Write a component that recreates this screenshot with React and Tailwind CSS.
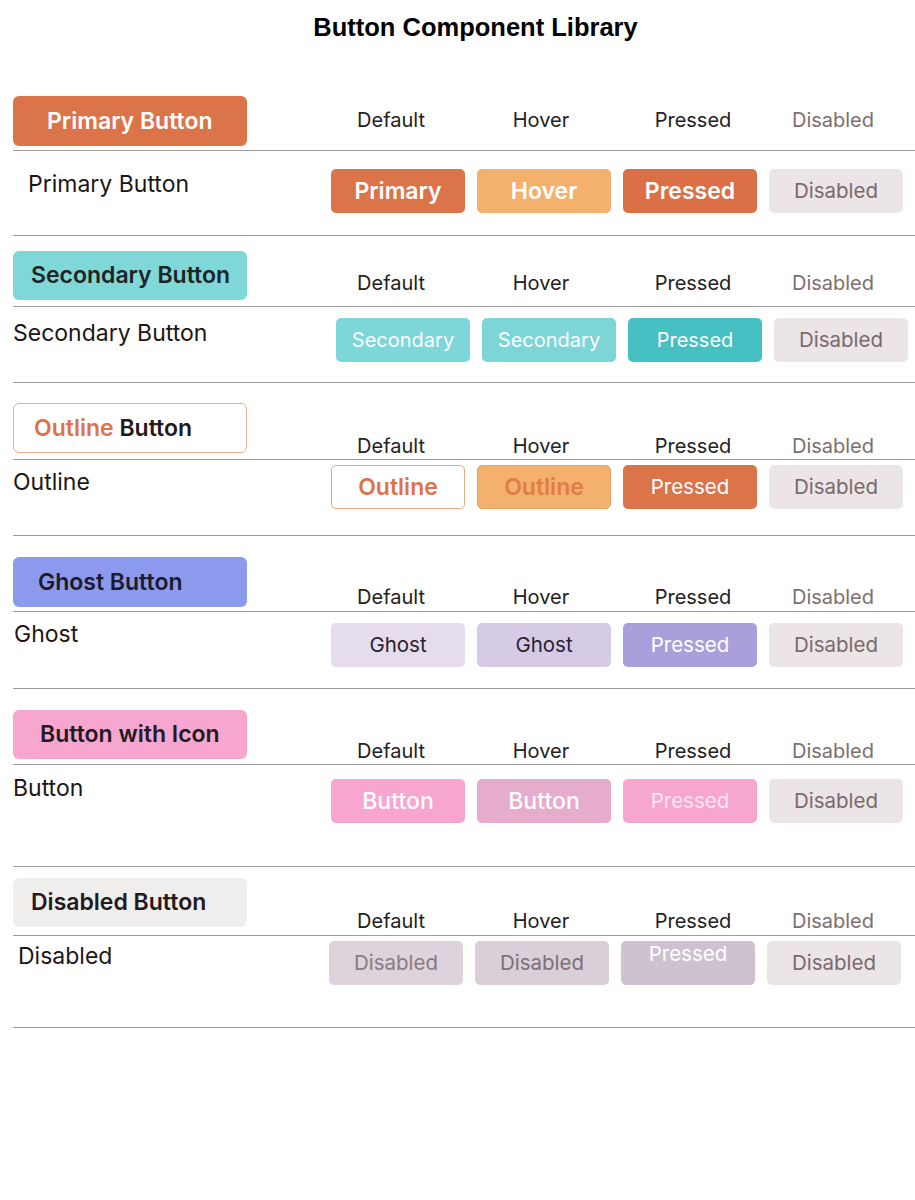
import React from 'react';

const STATES = [
  { name: 'Default', cls: 'w-[150px] text-[#222222]' },
  { name: 'Hover', cls: 'w-[150px] text-[#222222]' },
  { name: 'Pressed', cls: 'w-[154px] text-[#222222]' },
  { name: 'Disabled', cls: 'w-[126px] text-[#7d6e70]' },
];

const DISABLED = { text: 'Disabled', cls: 'bg-[#ebe5e7] text-[#7a6a6c] text-[20.5px]' };

const sections = [
  {
    wrap: 'pt-[53px]',
    head: 'h-[54px]',
    headBtn: 'h-[50px] bg-[#dc744a] text-white pl-[34px]',
    headText: <>Primary Button</>,
    labels: 'pb-[18px]',
    row: 'h-[84px]',
    labelBox: 'w-[318px] pl-[15px] pt-[18px]',
    rowLabel: 'Primary Button',
    btnBox: 'pt-[18px]',
    buttons: [
      { text: 'Primary', cls: 'bg-[#dc744a] text-white text-[23px] font-semibold' },
      { text: 'Hover', cls: 'bg-[#f4b06d] text-white text-[23px] font-semibold' },
      { text: 'Pressed', cls: 'bg-[#db6f46] text-white text-[23px] font-semibold' },
      DISABLED,
    ],
  },
  {
    wrap: 'pt-[15px]',
    head: 'h-[55px]',
    headBtn: 'h-[49px] bg-[#7fd7d8] text-[#1b2525] pl-[18px]',
    headText: <>Secondary Button</>,
    labels: 'pb-[11px]',
    row: 'h-[75px]',
    labelBox: 'w-[323px] pt-[11px]',
    rowLabel: 'Secondary Button',
    btnBox: 'pt-[11px]',
    buttons: [
      { text: 'Secondary', cls: 'bg-[#7dd6d8] text-white text-[20px]' },
      { text: 'Secondary', cls: 'bg-[#7cd5d7] text-white text-[20px]' },
      { text: 'Pressed', cls: 'bg-[#46c0c3] text-white text-[20px]' },
      DISABLED,
    ],
  },
  {
    wrap: 'pt-[20px]',
    head: 'h-[56px]',
    headBtn: 'h-[50px] bg-white border border-[#e4ae97] text-[#221a1a] pl-[20px]',
    headText: (
      <>
        <span className="text-[#dc744a]">Outline</span> Button
      </>
    ),
    labels: 'pb-[1px]',
    row: 'h-[75px]',
    labelBox: 'w-[318px] pt-[7px]',
    rowLabel: 'Outline',
    btnBox: 'pt-[5px]',
    buttons: [
      { text: 'Outline', cls: 'bg-white border border-[#e6a88e] text-[#dc744a] text-[23px] font-semibold' },
      { text: 'Outline', cls: 'bg-[#f4b06d] border border-[#eba262] text-[#e07c48] text-[23px] font-semibold' },
      { text: 'Pressed', cls: 'bg-[#dc744a] text-white text-[20.5px]' },
      DISABLED,
    ],
  },
  {
    wrap: 'pt-[21px]',
    head: 'h-[54px]',
    headBtn: 'h-[50px] bg-[#8b9aec] text-[#1d1a2c] pl-[25px]',
    headText: <>Ghost Button</>,
    labels: 'pb-[2px]',
    row: 'h-[76px]',
    labelBox: 'w-[318px] pl-[1px] pt-[7px]',
    rowLabel: 'Ghost',
    btnBox: 'pt-[11px]',
    buttons: [
      { text: 'Ghost', cls: 'bg-[#e5dcec] text-[#2a2230] text-[20.5px]' },
      { text: 'Ghost', cls: 'bg-[#d5cbe6] text-[#2a2230] text-[20.5px]' },
      { text: 'Pressed', cls: 'bg-[#a99fdb] text-white text-[20.5px]' },
      DISABLED,
    ],
  },
  {
    wrap: 'pt-[21px]',
    head: 'h-[54px]',
    headBtn: 'h-[49px] bg-[#f6a6cf] text-[#231a20] pl-[27px]',
    headText: <>Button with Icon</>,
    labels: 'pb-[1px]',
    row: 'h-[101px]',
    labelBox: 'w-[318px] pt-[8px]',
    rowLabel: 'Button',
    btnBox: 'pt-[14px]',
    buttons: [
      { text: 'Button', cls: 'bg-[#f6a6cf] text-white text-[23px] font-medium' },
      { text: 'Button', cls: 'bg-[#e6accb] text-white text-[23px] font-medium' },
      { text: 'Pressed', cls: 'bg-[#f6a6cf] text-[#fde6f1] text-[20.5px]' },
      DISABLED,
    ],
  },
  {
    wrap: 'pt-[11px]',
    head: 'h-[57px]',
    headBtn: 'h-[49px] bg-[#efeeed] text-[#221a1c] pl-[18px]',
    headText: <>Disabled Button</>,
    labels: 'pb-[2px]',
    row: 'h-[91px]',
    labelBox: 'w-[316px] pl-[5px] pt-[5px]',
    rowLabel: 'Disabled',
    btnBox: 'pt-[5px]',
    buttons: [
      { text: 'Disabled', cls: 'bg-[#ddd3dc] text-[#8a7a82] text-[20.5px]' },
      { text: 'Disabled', cls: 'bg-[#d8cfd9] text-[#7f7077] text-[20.5px]' },
      { text: 'Pressed', cls: 'bg-[#cdc2ce] text-white text-[20.5px] items-start pt-[3px]' },
      { text: 'Disabled', cls: 'bg-[#ebe5e8] text-[#7a6a6c] text-[20.5px]' },
    ],
  },
];

function Section({ s }) {
  return (
    <div className={s.wrap}>
      <div className={`flex pl-[13px] ${s.head}`}>
        <div
          className={`w-[234px] self-start flex items-center rounded-md text-[23px] font-semibold leading-none ${s.headBtn}`}
        >
          <span>{s.headText}</span>
        </div>
        <div className={`ml-[69px] flex self-end ${s.labels}`}>
          {STATES.map((st) => (
            <div key={st.name} className={`text-center text-[20px] leading-[24px] ${st.cls}`}>
              {st.name}
            </div>
          ))}
        </div>
      </div>
      <div className="ml-[13px] h-px bg-[#9c9c9c]" />
      <div className={`flex pl-[13px] ${s.row}`}>
        <div className={`${s.labelBox} shrink-0 text-[23px] leading-[30px] text-[#1c1616]`}>
          {s.rowLabel}
        </div>
        <div className={`flex gap-3 items-start ${s.btnBox}`}>
          {s.buttons.map((b, i) => (
            <div
              key={i}
              className={`w-[134px] h-[44px] rounded-[5px] flex items-center justify-center leading-none ${b.cls}`}
            >
              {b.text}
            </div>
          ))}
        </div>
      </div>
      <div className="ml-[13px] h-px bg-[#9c9c9c]" />
    </div>
  );
}

export default function App() {
  return (
    <div className="w-[915px] min-h-[1200px] bg-white font-['Inter','Noto_Sans',sans-serif]">
      <h1 className="pt-[11px] pl-[36px] text-center text-[25.5px] leading-[32px] font-bold text-black font-['Liberation_Sans','Arial',sans-serif]">
        Button Component Library
      </h1>
      {sections.map((s, i) => (
        <Section key={i} s={s} />
      ))}
    </div>
  );
}
